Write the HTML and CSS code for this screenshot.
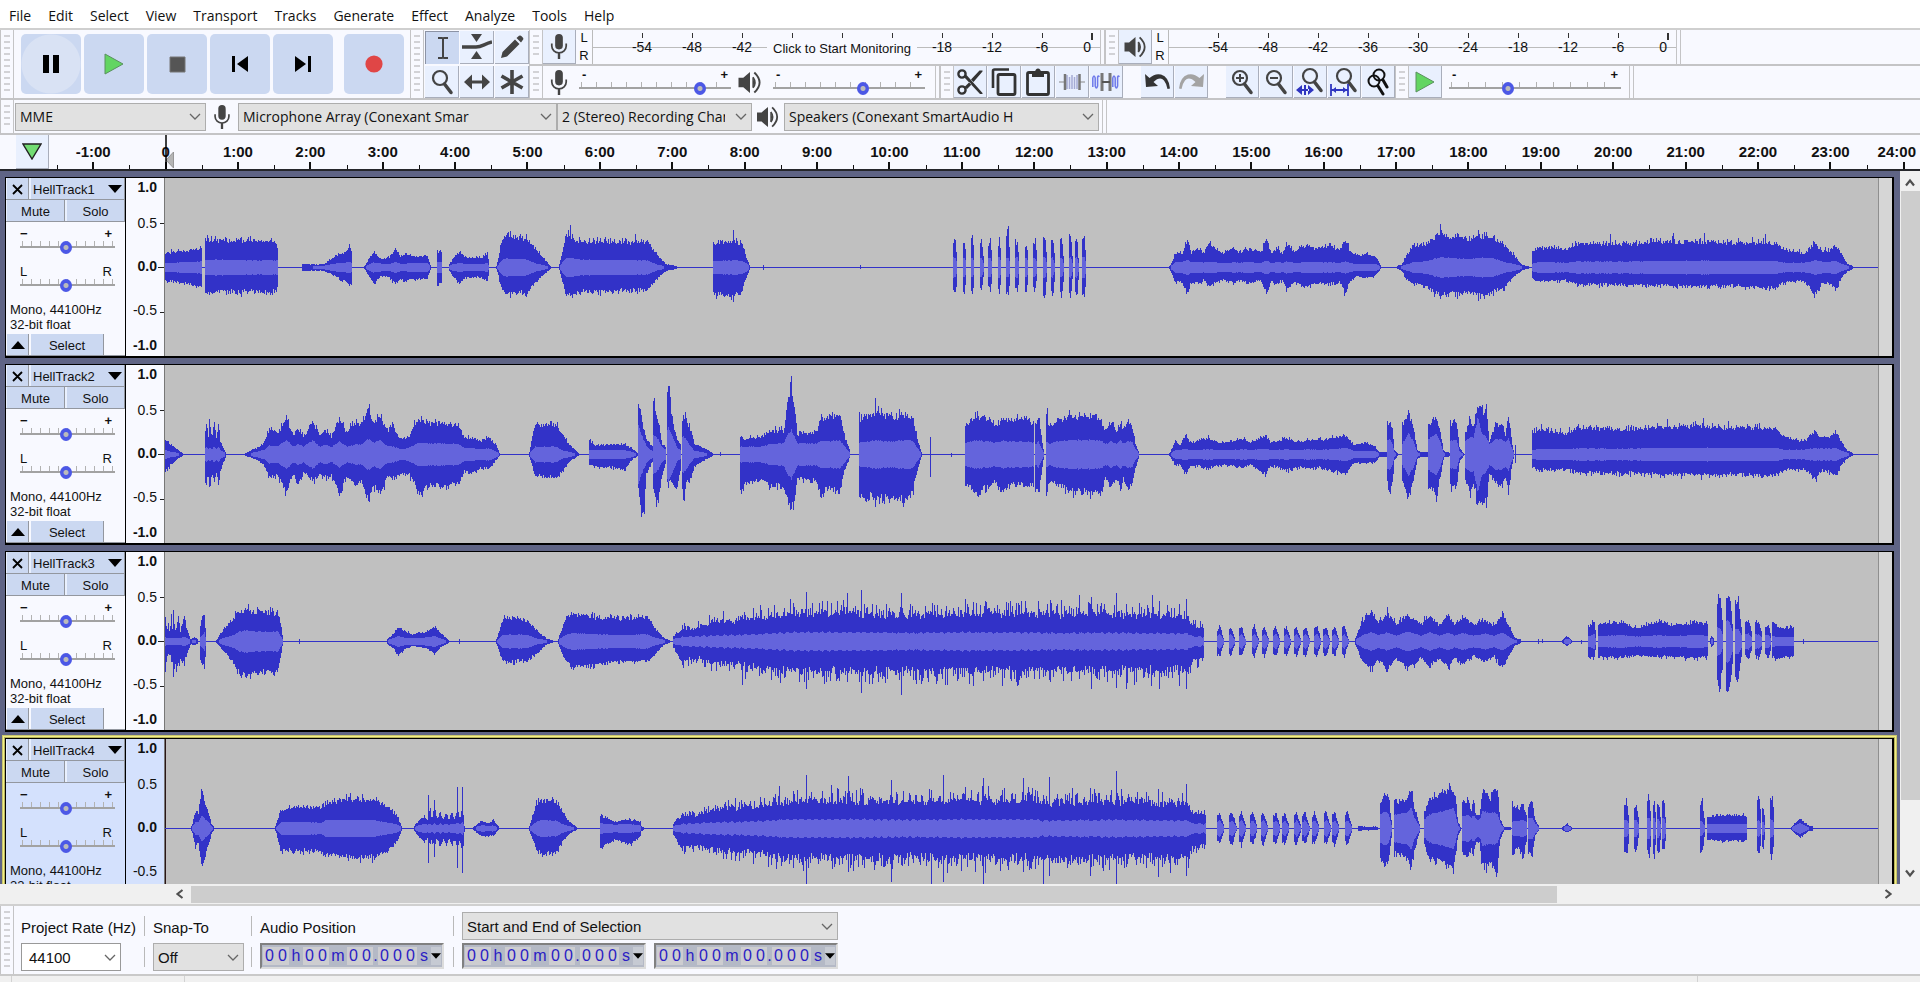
FILE: index.html
```html
<!DOCTYPE html>
<html lang="en">
<head>
<meta charset="utf-8">
<title>Audio editor</title>
<link rel="stylesheet" href="styles.css">
</head>
<body>
<svg class="defs" aria-hidden="true">
  <symbol id="i-mic" viewBox="0 0 18 26"><rect x="5" y="0" width="8" height="16" rx="4" fill="#444"/><path d="M1.500 10v2.500a7.500 7 0 0 0 15 0V10" fill="none" stroke="#444" stroke-width="1.800"/><path d="M9 19.500V26" stroke="#444" stroke-width="2.500"/></symbol>
  <symbol id="i-speaker" viewBox="0 0 24 24"><path d="M0 7h5l7-6v22l-7-6H0z" fill="#444"/><path d="M14.500 7.500c2.500 2 2.500 7 0 9" fill="#444"/><path d="M15 6.500q4 5.500 0 11M16.500 1.500q11 10.500 0 21" fill="none" stroke="#444" stroke-width="2"/></symbol>
  <symbol id="i-chevron" viewBox="0 0 12 7"><path d="M1 1l5 5 5-5" fill="none" stroke="#666" stroke-width="1.300"/></symbol>
  <symbol id="i-lens" viewBox="0 0 24 26"><circle cx="10" cy="9" r="7" fill="none" stroke="#444" stroke-width="2.200"/><path d="M14.500 15l6.500 8.500" stroke="#444" stroke-width="3.500" stroke-linecap="round"/></symbol>
  <symbol id="i-wedge" viewBox="0 0 14 8"><path d="M0 0h14L7 8z"/></symbol>
  <symbol id="i-arrow" viewBox="0 0 10 10"><path d="M1 7.500L5 2.500l4 5" fill="none" stroke="#505050" stroke-width="2.200"/></symbol>
</svg>

<nav class="menubar" aria-label="Main menu">
  <button>File</button><button>Edit</button><button>Select</button><button>View</button><button>Transport</button><button>Tracks</button><button>Generate</button><button>Effect</button><button>Analyze</button><button>Tools</button><button>Help</button>
</nav>

<header class="docks">
  <section class="dock dock-main">
    <div class="transport" role="toolbar" aria-label="Transport">
      <i class="grip"></i>
      <div class="transport-keys">
        <button class="key key-lit" aria-label="Pause"><svg width="18" height="18" viewBox="0 0 18 18"><path d="M1 0h6v18H1zM11 0h6v18h-6z"/></svg></button>
        <button class="key" aria-label="Play"><svg width="20" height="22" viewBox="0 0 20 22"><path d="M1 1l18 10L1 21z" fill="#62d562" stroke="#5a9060"/></svg></button>
        <button class="key" aria-label="Stop"><svg width="17" height="17" viewBox="0 0 17 17"><path d="M1 1h15v15H1z" fill="#555" stroke="#777"/></svg></button>
        <button class="key" aria-label="Skip to start"><svg width="18" height="16" viewBox="0 0 18 16"><path d="M1 0h3v16H1zM17 0v16L6 8z"/></svg></button>
        <button class="key" aria-label="Skip to end"><svg width="18" height="16" viewBox="0 0 18 16"><path d="M14 0h3v16h-3zM1 0v16l11-8z"/></svg></button>
        <button class="key key-record" aria-label="Record"><svg width="18" height="18" viewBox="0 0 18 18"><circle cx="9" cy="9" r="8.600" fill="#e04646"/></svg></button>
      </div>
    </div>

    <div class="tools" role="toolbar" aria-label="Tools">
      <i class="grip"></i>
      <div class="tools-grid">
        <button class="btn btn-down" aria-label="Selection tool"><svg width="14" height="22" viewBox="0 0 14 22"><path d="M2 1h4q1 0 1 1 0-1 1-1h4M2 21h4q1 0 1-1 0 1 1 1h4M7 1v20" fill="none" stroke="#444" stroke-width="2"/></svg></button>
        <button class="btn" aria-label="Envelope tool"><svg width="30" height="26" viewBox="0 0 30 26"><path d="M9 0h11l-5.500 8zM9 25h11l-5.500-8z" fill="#444"/><path d="M0 13h14c6 0 8-3 16-5" fill="none" stroke="#444" stroke-width="3.500"/></svg></button>
        <button class="btn" aria-label="Draw tool"><svg width="24" height="24" viewBox="0 0 24 24"><path d="M1 23l1.500-6L15 4.500l4.500 4.500L7 21.500zM16.500 3L19 .8q1.500-.8 2.600.4l1.400 1.500q.8 1.200-.2 2.400L21 7.500z" fill="#444"/></svg></button>
        <button class="btn" aria-label="Zoom tool"><svg width="24" height="26"><use href="#i-lens"/></svg></button>
        <button class="btn" aria-label="Time shift tool"><svg width="26" height="16" viewBox="0 0 26 16"><path d="M0 8l8-7.500v6h10v-6L26 8l-8 7.500v-6H8v6z" fill="#444"/></svg></button>
        <button class="btn" aria-label="Multi tool"><svg width="26" height="26" viewBox="0 0 26 26"><path d="M13 1v24M2.500 7l21 12M23.500 7l-21 12" stroke="#444" stroke-width="3.600"/></svg></button>
      </div>
    </div>

    <div class="dock-lines">
      <div class="line">
        <i class="grip"></i>
        <button class="btn" aria-label="Recording meter"><svg width="18" height="25"><use href="#i-mic"/></svg></button>
        <div class="lr"><span>L</span><span>R</span></div>
        <div class="meter">
          <span><b>-54</b></span><span><b>-48</b></span><span><b>-42</b></span><span></span><span></span><span></span><span><b>-18</b></span><span><b>-12</b></span><span><b>-6</b></span><span><b>0</b></span>
          <button class="meter-start">Click to Start Monitoring</button>
        </div>
        <i class="stop"></i>
        <i class="grip"></i>
        <button class="btn" aria-label="Playback meter"><svg width="23" height="22"><use href="#i-speaker"/></svg></button>
        <div class="lr"><span>L</span><span>R</span></div>
        <div class="meter">
          <span><b>-54</b></span><span><b>-48</b></span><span><b>-42</b></span><span><b>-36</b></span><span><b>-30</b></span><span><b>-24</b></span><span><b>-18</b></span><span><b>-12</b></span><span><b>-6</b></span><span><b>0</b></span>
        </div>
        <i class="stop"></i>
      </div>
      <div class="line">
        <i class="grip"></i>
        <svg class="mixer-icon" width="18" height="25"><use href="#i-mic"/></svg>
        <label class="slider mixer"><span><b>-</b><b>+</b></span><input type="range" aria-label="Recording volume" min="0" max="100" value="82"></label>
        <svg class="mixer-icon" width="24" height="23"><use href="#i-speaker"/></svg>
        <label class="slider mixer"><span><b>-</b><b>+</b></span><input type="range" aria-label="Playback volume" min="0" max="100" value="60"></label>
        <i class="stop"></i>
        <i class="grip"></i>
        <div class="btns">
          <button class="btn" aria-label="Cut"><svg width="26" height="26" viewBox="0 0 26 26"><g fill="none" stroke="#333" stroke-width="2.400"><circle cx="5" cy="5" r="3.600"/><circle cx="5" cy="21" r="3.600"/></g><path d="M7 8L23 25h2.500v-1L9.500 6zM7.500 18l5-5 2 2.500-4.500 4.500zM14 10.500L22.500 1.500h3v1L16.500 13z" fill="#333"/></svg></button>
          <button class="btn" aria-label="Copy"><svg width="26" height="28" viewBox="0 0 26 28"><path d="M2 20V3q0-1.500 1.500-1.500H18" fill="none" stroke="#333" stroke-width="2.600"/><rect x="7" y="6.500" width="17" height="20" rx="1.500" fill="none" stroke="#333" stroke-width="2.800"/></svg></button>
          <button class="btn" aria-label="Paste"><svg width="24" height="28" viewBox="0 0 24 28"><rect x="1.500" y="4.500" width="21" height="22" rx="1.500" fill="none" stroke="#333" stroke-width="2.800"/><path d="M6 4h3q.5-3.500 3-3.500T15 4h3v5H6z" fill="#333"/></svg></button>
          <button class="btn" aria-label="Trim"><svg width="26" height="18" viewBox="0 0 26 18"><path d="M0 9h6M20 9h6" stroke="#888"/><path d="M8 2v14M10.500 4v12M13 2v14M15.500 4v12M18 2v14" stroke="#a5abd4" stroke-width="1.500"/><path d="M6 1v16M20.500 1v16" stroke="#777" stroke-width="2.500"/></svg></button>
          <button class="btn" aria-label="Silence"><svg width="28" height="18" viewBox="0 0 28 18"><path d="M.8 14V5q1.200-4 2.400 0v8q1.200 4 2.400 0V4q.8-2 1.600 0M20.800 14V5q1.200-4 2.400 0v8q1.200 4 2.400 0V4q.8-2 1.600 0" fill="none" stroke="#6d79ea" stroke-width="1.500"/><path d="M10 0v18M18 0v18" stroke="#777" stroke-width="3"/><path d="M10 9h8" stroke="#555" stroke-width="2"/></svg></button>
        </div>
        <div class="btns">
          <button class="btn" aria-label="Undo"><svg width="25" height="17" viewBox="0 0 25 17"><path d="M0 1l1 13 12-1-4.500-4Q15 3 19 7.500q2.500 3 3.500 8.500l2.500-.5Q24 4 16 1.500 10 0 4.500 5z" fill="#333"/></svg></button>
          <button class="btn" aria-label="Redo"><svg width="25" height="17" viewBox="0 0 25 17"><path d="M25 1l-1 13-12-1 4.500-4Q10 3 6 7.500 3.500 10.500 2.500 16L0 15.500Q1 4 9 1.500 15 0 20.500 5z" fill="#a3a3a3"/></svg></button>
        </div>
        <div class="btns last">
          <button class="btn" aria-label="Zoom in"><svg width="24" height="26" viewBox="0 0 24 26"><use href="#i-lens" width="24" height="26"/><path d="M6 9h8M10 5v8" stroke="#444" stroke-width="2"/></svg></button>
          <button class="btn" aria-label="Zoom out"><svg width="24" height="26" viewBox="0 0 24 26"><use href="#i-lens" width="24" height="26"/><path d="M6 9h8" stroke="#444" stroke-width="2"/></svg></button>
          <button class="btn" aria-label="Fit selection"><svg width="28" height="29" viewBox="0 0 28 29"><use href="#i-lens" x="4" width="24" height="26"/><path d="M0 23l6-5v10zM18 23l-6-5v10zM5 22h8v2H5zM8 18h2v10H8z" fill="#2f35c0"/></svg></button>
          <button class="btn" aria-label="Fit project"><svg width="28" height="29" viewBox="0 0 28 29"><use href="#i-lens" x="4" width="24" height="26"/><path d="M1 17v12M18 17v12M1 23h17" stroke="#2f35c0" stroke-width="1.800"/><path d="M2 23l4-3v6zM17 23l-4-3v6z" fill="#2f35c0"/></svg></button>
          <button class="btn" aria-label="Zoom toggle"><svg width="24" height="28" viewBox="0 0 24 28"><g fill="none" stroke="#111" stroke-width="2"><circle cx="13" cy="7" r="5.500"/><circle cx="8" cy="13" r="5.500"/></g><path d="M12 18l5 8M17 12l4 7" stroke="#111" stroke-width="3" stroke-linecap="round"/></svg></button>
        </div>
        <i class="grip"></i>
        <button class="btn" aria-label="Play at speed"><svg width="20" height="22" viewBox="0 0 20 22"><path d="M1 1l18 10L1 21z" fill="#62d562" stroke="#5a9060"/></svg></button>
        <label class="slider speed"><span><b>-</b><b>+</b></span><input type="range" aria-label="Playback speed" min="0" max="100" value="33"></label>
        <i class="stop"></i>
      </div>
    </div>
  </section>

  <section class="dock dock-device">
    <i class="grip"></i>
    <div class="pick host"><select aria-label="Audio host"><option>MME</option></select><svg width="12" height="7"><use href="#i-chevron"/></svg></div>
    <svg class="device-icon" width="18" height="24"><use href="#i-mic"/></svg>
    <div class="pick input"><select aria-label="Recording device"><option>Microphone Array (Conexant Smar</option></select><svg width="12" height="7"><use href="#i-chevron"/></svg></div>
    <div class="pick channels"><select aria-label="Recording channels"><option>2 (Stereo) Recording Channels</option></select><svg width="12" height="7"><use href="#i-chevron"/></svg></div>
    <svg class="device-icon device-speaker" width="24" height="22"><use href="#i-speaker"/></svg>
    <div class="pick output"><select aria-label="Playback device"><option>Speakers (Conexant SmartAudio H</option></select><svg width="12" height="7"><use href="#i-chevron"/></svg></div>
    <i class="stop"></i>
  </section>

  <section class="timeline">
    <button class="btn pin" aria-label="Pinned head"><svg width="20" height="17" viewBox="0 0 20 17"><path d="M1 1h18l-9 15z" fill="#72dc72" stroke="#222" stroke-width="1.400"/></svg></button>
    <div class="hours">
      <span>-1:00</span><span class="origin">0<svg class="playhead" width="10" height="36" viewBox="0 0 10 36"><path d="M8.500 17v16L1 25z" fill="#b5b5b5" stroke="#888" stroke-width=".8"/><path d="M1 0v36" stroke="#000" stroke-width="1.500"/></svg></span><span>1:00</span><span>2:00</span><span>3:00</span><span>4:00</span><span>5:00</span><span>6:00</span><span>7:00</span><span>8:00</span><span>9:00</span><span>10:00</span><span>11:00</span><span>12:00</span><span>13:00</span><span>14:00</span><span>15:00</span><span>16:00</span><span>17:00</span><span>18:00</span><span>19:00</span><span>20:00</span><span>21:00</span><span>22:00</span><span>23:00</span><span class="last">24:00</span>
    </div>
  </section>
</header>

<main class="workspace">
  <div class="tracks" id="tracks"></div>
  <div class="vscroll"><svg width="10" height="10"><use href="#i-arrow"/></svg><i class="vthumb"></i><svg class="down" width="10" height="10"><use href="#i-arrow"/></svg></div>
</main>
<div class="hscroll"><svg class="left" width="10" height="10"><use href="#i-arrow"/></svg><div class="hrail"><i class="hthumb"></i></div><svg class="right" width="10" height="10"><use href="#i-arrow"/></svg></div>

<footer class="selection">
  <i class="grip"></i>
  <div class="group"><label for="rate">Project Rate (Hz)</label><div class="pick rate"><select id="rate"><option>44100</option></select><svg width="12" height="7"><use href="#i-chevron"/></svg></div></div>
  <i class="rule"></i>
  <div class="group"><label for="snap">Snap-To</label><div class="pick snap"><select id="snap"><option>Off</option></select><svg width="12" height="7"><use href="#i-chevron"/></svg></div></div>
  <i class="rule"></i>
  <div class="group"><span class="caption">Audio Position</span><div class="time" role="group" aria-label="Audio Position"></div></div>
  <i class="rule"></i>
  <div class="group range"><div class="pick mode"><select aria-label="Selection mode"><option>Start and End of Selection</option></select><svg width="12" height="7"><use href="#i-chevron"/></svg></div>
    <div class="times"><div class="time" role="group" aria-label="Selection start"></div><div class="time" role="group" aria-label="Selection end"></div></div></div>
</footer>
<div class="status"><i></i><i></i><i></i></div>

<template id="track-template">
  <article class="track">
    <div class="panel">
      <div class="row head"><button class="close" aria-label="Close track"><svg width="11" height="11" viewBox="0 0 11 11"><path d="M1 1l9 9M10 1l-9 9" stroke="#000" stroke-width="1.800"/></svg></button><button class="name"><span></span><svg width="14" height="8"><use href="#i-wedge"/></svg></button></div>
      <div class="row"><button>Mute</button><button>Solo</button></div>
      <label class="slider"><span><b>−</b><b>+</b></span><input type="range" aria-label="Gain" min="0" max="100" value="48"></label>
      <label class="slider"><span>L<em>R</em></span><input type="range" aria-label="Pan" min="0" max="100" value="48"></label>
      <p class="info">Mono, 44100Hz<br>32-bit float</p>
      <div class="row foot"><button class="close" aria-label="Collapse"><svg class="flip" width="14" height="8"><use href="#i-wedge"/></svg></button><button class="select">Select</button></div>
    </div>
    <div class="scale"><b>1.0</b><span>0.5</span><b>0.0</b><span>-0.5</span><b>-1.0</b></div>
    <svg class="wave" viewBox="0 0 1715 178" preserveAspectRatio="none"><path class="peak"/><path class="rms"/></svg>
    <div class="tail"></div>
  </article>
</template>
<template id="time-template"><span class="d"><i>0</i><i>0</i></span><span class="u">h</span><span class="d"><i>0</i><i>0</i></span><span class="u m">m</span><span class="d"><i>0</i><i>0</i></span><span class="u dot">.</span><span class="d"><i>0</i><i>0</i><i>0</i></span><span class="u">s</span><button aria-label="Time format"><svg width="10" height="6" viewBox="0 0 14 8"><path d="M0 0h14L7 8z"/></svg></button></template>
<script src="waves.js"></script>
</body>
</html>
```
FILE: waves.js
```js
// Envelope points: "x up down rms"; down defaults to up, rms to 40% of up.
// Points of one clip are separated by commas, clips by "|".
// Each track has an early and a late section with its own horizontal scale.
const SECTIONS = [
  { start: 0, first: 9, perPixel: 1.742 },
  { start: 875, first: 0, perPixel: 1.7807 }
];
const LEVEL = 3;
const MIDDLE = 89;

const pulses = (list) => list.split(",").map((p) => {
  const [x, w, up, down, rms] = p.trim().split(" ").map(Number);
  return `${x - w / 2} ${up * 0.9} ${down * 0.85} ${rms},${x} ${up} ${down} ${rms},${x + w / 2} ${up * 0.3} ${down * 0.35} ${rms * 0.4}`;
}).join("|");

const beats = (xs, amp, w) => xs.map((x) => `${x - w / 2} ${amp * 0.8} ${amp * 0.8} ${amp * 0.35},${x - 1} ${amp} ${amp} ${amp * 0.5},${x + w / 2 + 2} 4 4 3`).join("|");

const crowdStart = "896 12 18 5,910 38 60 12,935 38 48 14,970 62 68 17,1010 62 72 18,1060 76 80 22,1100 86 90 26,1200 86 90 26,1300 80 86 24,1400 86 90 26,1500 86 88 25,1570 84 86 25";

const TRACKS = [
  { name: "HellTrack1",
    early: ["9 42 38 12,40 46 44 14,73 58 58 17|78 82 72 20,100 80 70 22,150 82 70 20,200 75 70 20,205 60 60 20|248 8 8 2,285 8 8 4,305 32 24 10,325 46 45 14,330 75 48 14,334 40 50 12|356 3,372 46 48 14,385 24 22 10,400 30 28 10,410 56 48 14,418 32 32 10,428 40 38 10,440 32 32 12,465 34 32 12,471 5|482 46 48 14,491 46 48 14|504 8,512 30 30 10,523 48 46 12,532 28 28 8,560 26 28 8,570 42 40 12,573 5|586 3,596 85 72 22,604 92 76 26,640 84 74 22,655 50 40 10,680 3|695 5,706 90 78 26,714 92 80 28,730 76 70 22,850 74 66 20,870 32 28 6,883 8 8 2,902 3|965 70 76 18,1000 80 84 20,1015 70 72 18,1022 30 30 12,1029 3",
      pulses("1387 6 80 78 28,1403 6 76 80 28,1417 6 96 80 28,1433 6 78 70 28,1448 6 78 70 28,1464 6 74 70 28,1479 6 108 84 28,1495 6 76 70 28,1511 6 70 70 28,1526 6 80 70 28,1541 6 95 88 28,1557 6 95 88 28")].join("|"),
    late: [pulses("10 6 95 92 30,24 6 95 90 28,40 6 95 85 28,56 6 95 85 28,67 5 85 84 28,80 6 98 88 30"),
      "232 3,243 42 42 15,255 42 42 16,263 82 78 22,270 42 42 15,283 56 48 15,293 38 36 14,301 74 52 15,320 46 38 13,330 42 34 12,345 55 42 14,358 44 36 13,370 56 46 15,385 46 40 13,395 44 38 12,405 88 75 20,412 44 40 12,425 56 46 15,433 36 34 12,440 72 65 17,455 44 42 12,475 64 54 15,490 56 46 14,505 60 44 14,520 62 48 14,535 52 42 12,545 84 78 18,552 50 42 12,565 33 24 9,580 40 30 10,598 32 24 10,608 3|637 3,645 8,655 38 35 8,665 62 46 14,690 70 56 18,702 90 72 24,714 100 82 30,740 90 74 26,770 84 72 24,785 92 82 28,810 90 72 26,830 66 56 15,845 38 28 10,860 8,873 2|880 45 30 10,890 58 40 15,940 55 36 13,960 68 48 17,1040 70 50 16,1110 76 52 18,1180 76 54 19,1220 74 52 18,1310 74 58 18,1330 52 42 13,1365 40 38 13,1382 70 78 20,1395 48 46 16,1410 52 48 16,1420 66 66 18,1430 40 30 10,1440 10,1450 3"].join("|"),
    spikes: [[0, 83, 96, 70], [0, 90, 94, 76], [0, 604, 102, 78], [0, 714, 125, 84], [0, 830, 98, 72], [0, 1000, 110, 102], [0, 1052, 6, 6], [0, 1222, 6, 2], [1, 714, 128, 94], [1, 783, 110, 100], [1, 1018, 98, 52], [1, 1130, 102, 60], [1, 1186, 103, 58], [1, 1295, 98, 66]] },
  { name: "HellTrack2",
    early: "9 42 48 12,15 32 35 8,30 12 12 4,40 2|78 60 70 18,81 90 82 20,84 55 60 14,86 105 98 20,90 50 55 14,94 95 78 22,98 45 50 14,102 100 98 22,105 35 45 12,115 3|148 2,165 15 12 5,180 32 28 12,190 75 65 25,205 65 60 25,220 102 115 42,232 55 55 22,240 76 90 30,250 50 48 22,266 100 78 42,278 55 58 22,288 70 66 28,298 52 58 20,312 104 115 38,325 65 65 22,342 98 88 30,350 86 80 28,362 138 135 45,372 90 96 35,384 120 118 42,395 72 68 24,403 84 70 24,418 48 60 15,432 50 52 18,450 110 110 34,470 92 92 32,520 88 88 30,530 45 50 18,545 50 55 18,558 38 38 14,572 48 42 17,585 28 15 8,591 3|643 5,653 90 62 22,690 86 68 22,700 60 50 12,715 22 15 5,730 2|748 40 26 12,760 26 36 12,785 28 36 12,810 28 45 12,825 15 12 6,833 3|835 138 100 85,839 120 178 60,845 70 175 40,848 50 60 25,856 28 30 12,860 20 20 8|861 155 100 60,867 110 158 50,872 80 110 35,876 30 60 20,883 20 20 15|885 180 80 70,887 206 85 80,892 120 80 60,902 45 100 20,909 25 30 10|911 110 85 55,914 108 152 50,917 105 75 45,925 78 78 25,932 30 35 10,950 18 15 4,965 2|1013 50 118 22,1020 46 86 22,1050 52 74 22,1065 70 92 30,1088 70 96 32,1092 130 112 50,1101 210 165 72,1108 125 130 45,1112 60 68 32,1145 66 76 32,1152 108 118 40,1165 110 98 38,1185 116 112 42,1195 50 40 20,1204 3|1220 105 125 35,1247 125 125 40,1275 108 128 38,1300 118 138 42,1312 105 110 40,1320 50 50 20,1328 3|1404 88 88 35,1425 115 110 40,1447 106 92 38,1455 80 78 34,1470 96 106 40,1480 98 86 38,1505 108 90 38,1524 86 92 35|1527 98 105 30,1532 105 110 40,1540 6|1544 110 110 30,1547 125 120 40,1552 70 80 30,1570 90 90 32",
    late: "0 100 100 30,8 5|12 115 110 40,18 75 80 30,30 102 88 38,60 112 110 42,100 114 112 42,112 88 112 38,118 68 68 30,127 98 92 38,137 68 72 30,145 98 100 40,150 68 70 30,158 104 110 40,165 86 88 36,172 25 30 12,178 3|232 3,243 38 32 12,250 26 25 12,261 60 60 16,268 34 32 12,285 42 34 13,300 48 40 14,320 34 30 12,345 36 34 13,364 48 38 14,375 33 28 12,403 58 60 16,412 34 30 12,440 46 46 14,460 36 36 12,480 40 40 14,500 42 38 13,520 46 46 14,545 58 58 18,560 28 24 10,580 33 24 10,598 22 22 9,606 3|606 5,619 5|619 85 80 40,623 105 110 45,629 70 85 30,632 15,638 3|646 78 70 30,657 128 132 62,667 70 70 35,673 12,680 5,692 5|693 88 100 45,707 115 115 60,713 75 75 40,720 8,731 4|732 90 90 40,745 98 100 40,750 18,757 3|760 62 70 40,769 105 110 50,775 80 80 50,782 148 146 110,790 128 140 60,798 140 138 50,803 40 50 30,815 92 88 45,825 88 92 45,832 58 68 35,837 110 115 45,843 38 38 20,847 3|880 60 38 12,890 75 44 15,940 60 44 14,960 80 52 17,1040 72 54 16,1110 82 58 18,1180 84 60 19,1220 78 58 18,1310 76 62 18,1330 50 45 13,1365 38 40 13,1382 70 72 18,1395 48 46 16,1410 50 48 16,1420 66 66 18,1430 40 30 10,1440 10,1450 3",
    spikes: [[0, 365, 150, 140], [0, 682, 100, 65], [0, 1247, 168, 130], [0, 1343, 50, 66], [0, 978, 5, 4], [0, 1380, 4, 6], [1, 14, 138, 110], [1, 850, 28, 25], [1, 1120, 106, 60], [1, 1184, 108, 58], [1, 1228, 98, 60]] },
  { name: "HellTrack3",
    early: "9 70 75 12,12 30 40 8,14 60 40 8,17 20 35 8,19 82 60 10,21 30 60 8,23 84 95 10,26 30 70 8,28 40 78 10,32 75 66 10,35 28 50 10,42 72 62 12,46 38 40 10,50 20 20 6,53 6,60 10,66 5|70 50 60 12,73 70 60 15,77 76 80 25,80 5|98 2,112 40 30 10,128 68 65 18,138 88 92 28,150 94 98 32,165 88 90 28,205 84 88 28,211 40 30 12,214 2|395 5,408 25 20 10,415 42 38 15,427 28 20 10,440 20 12 9,465 28 20 11,478 44 38 15,488 25 15 8,502 3|586 5,597 68 60 18,608 70 60 20,640 60 54 18,655 35 35 8,672 8,684 2|693 5,705 60 50 18,716 84 75 24,740 72 72 22,800 68 60 18,850 70 58 20,865 35 35 10,880 8,890 2|" + crowdStart,
    late: ["0 84 88 24,130 82 86 24,240 80 86 22,265 78 84 22,272 45 55 14,293 45 50 12", beats([322, 342, 361, 384, 402, 422, 441, 459, 475, 495, 511, 527, 544], 43, 9),
      "562 5,575 60 55 18,590 88 80 26,603 56 52 18,620 84 85 26,635 50 45 16,655 76 80 28,680 50 46 16,695 80 72 26,712 48 45 16,728 76 80 26,742 48 46 16,755 74 68 24,775 48 40 16,795 64 60 22,812 46 42 16,826 80 78 26,838 45 40 12,848 10,860 3|933 3,941 14 12 8,950 3|980 45 45 15,990 60 50 22,993 8|998 52 46 15,1040 56 44 18,1060 40 42 14,1080 46 42 14,1105 62 44 18,1130 46 44 15,1170 58 48 18,1193 50 46 16|1196 5,1199 15,1203 4",
      pulses("1214 10 135 145 40,1231 11 140 152 60,1247 11 118 108 35,1265 12 62 50 22,1283 12 62 48 20,1300 10 50 48 18"), "1307 60 48 15,1320 40 46 12,1345 38 46 12"].join("|"),
    spikes: [[0, 153, 110, 96], [0, 1127, 148, 142], [0, 1199, 145, 120], [0, 1223, 152, 152], [0, 1292, 145, 158], [0, 1016, 78, 128], [0, 242, 6, 5], [0, 521, 6, 5], [1, 20, 122, 120], [1, 72, 138, 110], [1, 92, 132, 142], [1, 137, 143, 138], [1, 155, 110, 140], [1, 201, 138, 100], [1, 213, 120, 140], [1, 250, 110, 132], [1, 262, 125, 140], [1, 620, 102, 90], [1, 890, 6, 6], [1, 898, 5, 4], [1, 967, 2, 5], [1, 1362, 5, 5]] },
  { name: "HellTrack4", focused: true,
    early: "55 5,62 50 55 20,67 40 40 18,72 130 122 40,76 85 90 30,80 68 70 25,90 10,94 2|201 5,210 55 65 17,240 62 65 18,280 62 65 16,290 76 74 24,330 86 84 24,370 84 84 24,400 60 60 15,415 28 30 10,421 2|442 5,452 26 26 10,460 36 40 12,466 22 26 10,470 60 50 14,473 26 30 8,478 68 62 15,482 24 26 8,488 50 55 14,493 26 26 8,498 50 52 14,503 24 26 8,508 44 46 14,513 30 32 10,518 50 50 16,522 30 34 10,527 60 70 20,530 5|546 3,560 22 22 8,572 14 20 6,580 26 22 8,590 2|643 5,655 70 60 18,665 84 76 24,690 80 72 22,700 48 40 12,712 20 16 6,725 3|768 40 55 15,780 28 45 12,795 18 30 10,818 26 46 12,838 20 25 8,840 5,845 2|" + crowdStart,
    late: ["0 78 92 22,130 82 90 24,240 78 88 22,265 78 84 22,272 50 60 14,297 42 48 12", beats([322, 344, 361, 381, 400, 422, 438, 459, 474, 491, 512, 527, 550], 47, 10),
      "568 5,580 4,603 4|607 78 85 40,616 108 110 50,622 90 95 40,628 8|633 80 74 40,655 86 84 45,662 125 125 60,668 60 60 30,678 5|686 48 50 25,693 80 85 40,715 102 98 50,738 115 120 60,743 90 80 40,747 20,752 3|755 68 70 35,765 86 90 40,771 50 55 30,775 84 80 40,779 40 40 25,786 40 40 25,790 115 115 50,805 90 104 45,812 122 124 50,818 110 115 40,822 30 30 15,829 4|829 4,842 3|844 70 70 20,855 56 55 22,863 76 80 25,870 30 30 15|873 70 72 30,880 76 76 30,884 25 22 15,892 3|933 3,941 13 11 8,950 3|1192 35 30 12,1210 38 36 13,1262 36 35 12|1340 3,1356 28 26 15,1370 8,1380 4",
      pulses("1048 8 76 80 24,1065 8 68 68 24,1088 6 95 80 30,1097 5 80 86 30,1105 6 78 76 26,1114 6 80 70 30,1182 8 82 72 20,1284 6 92 76 22,1291 5 62 58 18,1307 7 92 80 26")].join("|"),
    spikes: [[0, 332, 104, 86], [0, 467, 98, 102], [0, 477, 85, 85], [0, 518, 122, 116], [0, 526, 122, 132], [0, 1127, 158, 168], [0, 1201, 155, 130], [0, 1275, 143, 160], [0, 1366, 158, 160], [0, 1345, 80, 165], [0, 1436, 150, 165], [0, 1505, 150, 130], [0, 1551, 152, 140], [0, 1541, 95, 170], [1, 8, 98, 165], [1, 18, 150, 120], [1, 90, 120, 142], [1, 137, 170, 168], [1, 212, 118, 145], [1, 262, 132, 142]] }
];

function generator(seed) {
  let s = seed;
  return () => ((s = (s * 16807) % 2147483647) / 2147483647);
}

function column(levels, x, up, down, rms) {
  const old = levels[x] || [0, 0, 0];
  levels[x] = [Math.max(old[0], up), Math.max(old[1], down), Math.max(old[2], rms)];
}

function readClip(text, section, levels, random) {
  const points = text.split(",").map((p) => {
    const [x, up, down = up, rms = up * 0.4] = p.trim().split(" ").map(Number);
    return [section.start + (x - section.first) / section.perPixel, up, down, rms];
  });
  const limit = section.start ? 1715 : 875;
  for (let x = Math.round(points[0][0]); x <= points[points.length - 1][0] && x < limit; x++) {
    let i = 1;
    while (i < points.length - 1 && points[i][0] < x) i++;
    const [a, b] = [points[i - 1], points[i]];
    const t = Math.min(1, Math.max(0, (x - a[0]) / (b[0] - a[0] || 1)));
    const mix = (k) => a[k] + (b[k] - a[k]) * t;
    const crowd = x > 509 && x < 1042 && levels.crowd;
    const noise = () => {
      const r = random();
      return crowd ? 0.8 + 0.24 * random() + 0.5 * r * r * r : 0.89 + 0.16 * random() + 0.2 * r * r * r;
    };
    const ripple = crowd ? 2 * Math.sin(x * 0.9) : 0;
    column(levels, x, mix(1) * noise(), mix(2) * noise(), mix(3) * (0.95 + 0.1 * random()) + ripple);
  }
}

function draw(track, svg, seed) {
  const random = generator(seed);
  const levels = [];
  levels.crowd = seed > 300;
  track.early.split("|").forEach((c) => readClip(c, SECTIONS[0], levels, random));
  track.late.split("|").forEach((c) => readClip(c, SECTIONS[1], levels, random));
  track.spikes.forEach(([s, x, up, down]) => {
    const section = SECTIONS[s];
    column(levels, Math.round(section.start + (x - section.first) / section.perPixel), up, down, 1);
  });
  let peak = "", rms = "";
  for (let x = 0; x < 1715; x++) {
    const [up, down, mean] = levels[x] || [1, 1, 0];
    const top = Math.round(MIDDLE - up / LEVEL);
    const bottom = Math.max(top + 1, Math.round(MIDDLE + 1 + down / LEVEL));
    peak += `M${x} ${top}h1V${bottom}h-1z`;
    if (mean > 3) {
      const m = Math.round(mean / LEVEL);
      rms += `M${x} ${MIDDLE - m}h1v${2 * m + 1}h-1z`;
    }
  }
  svg.querySelector(".peak").setAttribute("d", peak);
  svg.querySelector(".rms").setAttribute("d", rms);
}

const list = document.getElementById("tracks");
TRACKS.forEach((track, i) => {
  const node = document.getElementById("track-template").content.cloneNode(true);
  node.querySelector(".name span").textContent = track.name;
  if (track.focused) node.querySelector(".track").classList.add("focused");
  draw(track, node.querySelector(".wave"), 101 + i * 101);
  list.appendChild(node);
});
document.querySelectorAll(".time").forEach((field) => {
  field.appendChild(document.getElementById("time-template").content.cloneNode(true));
});
```
FILE: styles.css
```css
* { box-sizing: border-box; }
:root { --paper: #f8f9ff; --edge: #c4c4c6; --blue: #cbd8f1; --pale: #e9f0fe; --slate: #5f6485; }
body { margin: 0; height: 100vh; display: flex; flex-direction: column; overflow: hidden; background: var(--paper); color: #111; font-family: "Liberation Sans", Arial, sans-serif; font-size: 13px; }
button, select, input { font: inherit; color: inherit; margin: 0; padding: 0; border: 0; border-radius: 0; }
svg { display: block; flex: none; }
.defs { position: absolute; width: 0; height: 0; }

.menubar { flex: none; height: 30px; display: flex; padding: 3px 0 0; background: #fff; border-bottom: 2px solid #cfcfcf; font: 14px "Open Sans", "Noto Sans", sans-serif; }
.menubar button { background: none; padding: 0 8px 0 9px; }

.docks { flex: none; }
.dock { display: flex; border-bottom: 2px solid var(--edge); }
.dock-main { height: 70px; }
.grip { flex: none; align-self: stretch; width: 14px; border: solid var(--edge); border-width: 0 1px; background: repeating-linear-gradient(#d2d2d6 0 2px, transparent 2px 6px) center / 6px calc(100% - 10px) no-repeat; }
.stop { flex: none; align-self: stretch; width: 5px; border: solid var(--edge); border-width: 0 1px; }
.transport, .tools, .line { display: flex; }
.transport { width: 410px; }
.transport-keys { display: flex; gap: 3px; padding: 4px 0 4px 7px; }
.key { width: 60px; height: 60px; display: grid; place-items: center; background: var(--blue); border-radius: 5px; }
.key-lit { background: radial-gradient(circle, #d9e2f4 0 29px, var(--blue) 30px); }
.key-record { margin-left: 8px; }
.tools-grid { display: grid; grid-template-columns: repeat(3, 34px); grid-template-rows: 33px 32px; gap: 2px 1px; padding: 1px 0 0 1px; }
.btn { flex: none; width: 33px; display: grid; place-items: center; background: var(--pale); border-right: 1px solid #a9aebb; border-bottom: 1px solid #a9aebb; }
.tools .btn { width: 34px; }
.btn-down { background: var(--blue); border: 1px solid #8c93a5; border-width: 1px 0 0 1px; }
.dock-lines { flex: 1; display: flex; flex-direction: column; }
.line { flex: 1; min-height: 0; }
.line:first-child { flex: 0 0 36px; border-bottom: 2px solid var(--edge); }
.lr { width: 16px; display: flex; flex-direction: column; justify-content: space-between; align-items: center; font-size: 13px; line-height: 16px; }
.meter { position: relative; width: 508px; display: flex; padding-right: 7px; border-left: 1px solid #bbb; background: linear-gradient(#bcbcbc, #bcbcbc) 0 17px / 100% 1px no-repeat; font-size: 14px; }
.meter span { flex: 1; display: flex; justify-content: flex-end; align-items: center; background: linear-gradient(#333, #333) right 3px / 1px 5px no-repeat; }
.meter span b { width: 24px; margin-right: -11px; font-weight: normal; text-align: center; }
.meter span:nth-child(10) { background-size: 2px 7px; }
.meter span:nth-child(10) b { margin-right: 2px; text-align: right; }
.meter-start { position: absolute; left: 174px; top: 9px; height: 18px; width: 150px; background: var(--paper); font-size: 13px; white-space: nowrap; }

.slider { display: flex; flex-direction: column; }
.slider span { display: flex; justify-content: space-between; padding: 0 3px; line-height: 12px; }
.slider em { font-style: normal; }
.slider input { appearance: none; width: 100%; height: 14px; --step: 15px; background: linear-gradient(#a2a2a2, #a2a2a2) 0 6px / 100% 2px no-repeat, repeating-linear-gradient(90deg, #b2b2b2 0 1px, transparent 1px var(--step)) 2px 1px / 100% 5px no-repeat; }
.slider input::-webkit-slider-thumb { appearance: none; width: 12px; height: 13px; border-radius: 50%; background: radial-gradient(circle, #bbb 0 2px, #4c58e6 3px); }
.mixer { width: 152px; padding-top: 3px; }
.speed { width: 172px; padding-top: 3px; margin-left: 7px; }
.speed input { --step: 17px; }
.mixer + .stop { margin-left: 10px; }
.speed + .stop { margin-left: 8px; }
.mixer-icon { align-self: center; margin: 0 11px 0 7px; }
.btns { display: flex; gap: 1px; margin-right: 18px; }
.btns.last { margin-right: 0; }

.dock-device { height: 35px; align-items: center; }
.pick { display: grid; align-items: center; }
.pick > * { grid-area: 1 / 1; min-width: 0; }
.pick select { appearance: none; width: 100%; height: 28px; padding: 0 26px 0 4px; background: #e1e1e1; border: 1px solid #adadad; font: 14px "Open Sans", "Noto Sans", sans-serif; text-overflow: clip; overflow: hidden; }
.pick svg { justify-self: end; margin-right: 5px; pointer-events: none; }
.host { width: 191px; margin-left: 1px; }
.input { width: 319px; }
.channels { width: 195px; }
.output { width: 315px; margin-right: 3px; }
.device-icon { margin: 0 7px; }
.device-speaker { margin: 0 4px; }

.timeline { height: 36px; display: flex; overflow: hidden; border-bottom: 2px solid #26272b; }
.pin { margin-left: 16px; }
.hours { flex: 1; display: grid; grid-template-columns: repeat(26, 1fr); margin: 0 -19px 0 8px; font-size: 15px; font-weight: bold; }
.hours span { position: relative; text-align: center; line-height: 34px; background: linear-gradient(#111, #111) center bottom / 2px 7px no-repeat, linear-gradient(#111, #111) left bottom / 1px 4px no-repeat; }
.hours .last { padding-right: 12px; background-position: 36px bottom, left bottom; }
.playhead { position: absolute; left: calc(50% - 1px); top: 0; }

.workspace { flex: 1; min-height: 0; display: flex; }
.tracks { flex: 1; min-width: 0; overflow: hidden; padding: 6px 6px 0 5px; display: flex; flex-direction: column; gap: 6px; background: var(--slate); }
.track { flex: none; display: flex; border: solid #000; border-width: 1px 2px 2px 1px; background: var(--paper); }
.focused { box-shadow: 0 0 0 1px #b9b55c, 0 0 0 2px #f3ef86, 0 0 0 3px #c9c66c; }
.panel { width: 120px; height: 178px; display: flex; flex-direction: column; border-right: 1px solid #000; }
.focused .panel, .focused .scale { background: #d4e1fd; }
.row { display: flex; gap: 2px; height: 22px; padding-left: 1px; background: var(--pale); border-bottom: 1px solid #93979f; }
.row button { flex: 1; padding-top: 1px; background: var(--blue); border-right: 1px solid #93979f; }
.row .close { flex: none; width: 22px; display: grid; place-items: center; }
.row .name { display: flex; justify-content: space-between; align-items: center; padding: 1px 2px 0; }
.row .select { flex: none; width: 73px; }
.foot { margin-top: auto; background: none; }
.flip { transform: rotate(180deg); }
.panel .slider { margin: 6px 10px 6px 14px; }
.panel .slider span { padding-left: 0; }
.panel .slider input { --step: 9px; }
.info { margin: 4px 0 0 4px; line-height: 15px; }
.scale { width: 39px; padding: 1px 7px 3px 0; display: flex; flex-direction: column; justify-content: space-between; text-align: right; font-size: 14px; line-height: 16px; border-right: 1px solid #777; background-image: linear-gradient(#222, #222), linear-gradient(#222, #222), linear-gradient(#222, #222); background-size: 4px 1px, 6px 1px, 4px 1px; background-position: right 45px, right 89px, right 134px; background-repeat: no-repeat; }
.scale span:nth-child(2) { margin-bottom: 8px; }
.scale span:nth-child(4) { margin-top: 8px; }
.wave { flex: 1; min-width: 0; height: 178px; background: #c0c0c0; shape-rendering: crispEdges; }
.peak { fill: #3232c8; }
.rms { fill: #6464dc; }
.focused .wave { box-shadow: inset 1px 0 #2a1515; }
.tail { width: 14px; background: #d6d6d6; border-left: 1px solid #8f8f8f; }
.vscroll { width: 20px; display: flex; flex-direction: column; align-items: center; gap: 3px; padding: 7px 0 6px; background: #f0f0f0; }
.vthumb { width: 19px; flex: 0 0 87%; margin-bottom: auto; background: #cdcdcd; }
.down { transform: rotate(180deg); }
.hscroll { flex: none; height: 22px; display: flex; align-items: center; gap: 6px; padding: 0 27px 0 175px; background: #f0f0f0; border-bottom: 2px solid #d0d0d0; }
.hrail { flex: 1; align-self: stretch; padding: 2px 0 1px; }
.hthumb { display: block; width: 81%; height: 100%; background: #cdcdcd; }
.left { transform: rotate(-90deg); }
.right { transform: rotate(90deg); }

.selection { flex: none; height: 70px; display: flex; font-size: 15px; border-bottom: 2px solid #c9c9c9; }
.group { display: flex; flex-direction: column; padding-top: 6px; }
.group label, .group .caption { height: 31px; line-height: 31px; white-space: nowrap; }
.group .pick select { font: 15px "Liberation Sans", Arial, sans-serif; }
.selection .grip + .group { margin-left: 7px; width: 122px; }
.rule { width: 10px; margin: 10px 0 0; background: linear-gradient(#b9b9b9, #b9b9b9) 1px 0 / 1px 20px no-repeat, linear-gradient(#b9b9b9, #b9b9b9) 1px 31px / 1px 20px no-repeat; }
.rate { width: 100px; }
.group .rate select { background: #fff; border-color: #999; padding-left: 7px; }
.snap { width: 91px; margin-right: 6px; }
.range { gap: 3px; }
.times { display: flex; gap: 8px; }
.time { width: 184px; height: 26px; display: flex; padding: 2px 1px; border: 2px solid #808080; border-right-color: #dcdcdc; border-bottom-color: #dcdcdc; background: #b4b9c6; color: #2a20c4; font-size: 16px; line-height: 18px; }
.group > .time { margin-right: 8px; }
.time span { flex: none; text-align: center; }
.time .d { display: flex; background: #cdcdd0; }
.time .d i { width: 13px; font-style: normal; }
.time .u { width: 14px; }
.time .m { width: 18px; }
.time .dot { width: 5px; }
.time button { flex: 1; display: grid; place-items: center; background: #c6cad3; }
.status { flex: none; height: 6px; display: flex; background: #f0f0f0; }
.status i { width: 173px; border-right: 1px solid #d2d2d2; }
.status i:first-child { width: 12px; }
.status i:last-child { width: auto; flex: 1; margin-right: 222px; }
```
